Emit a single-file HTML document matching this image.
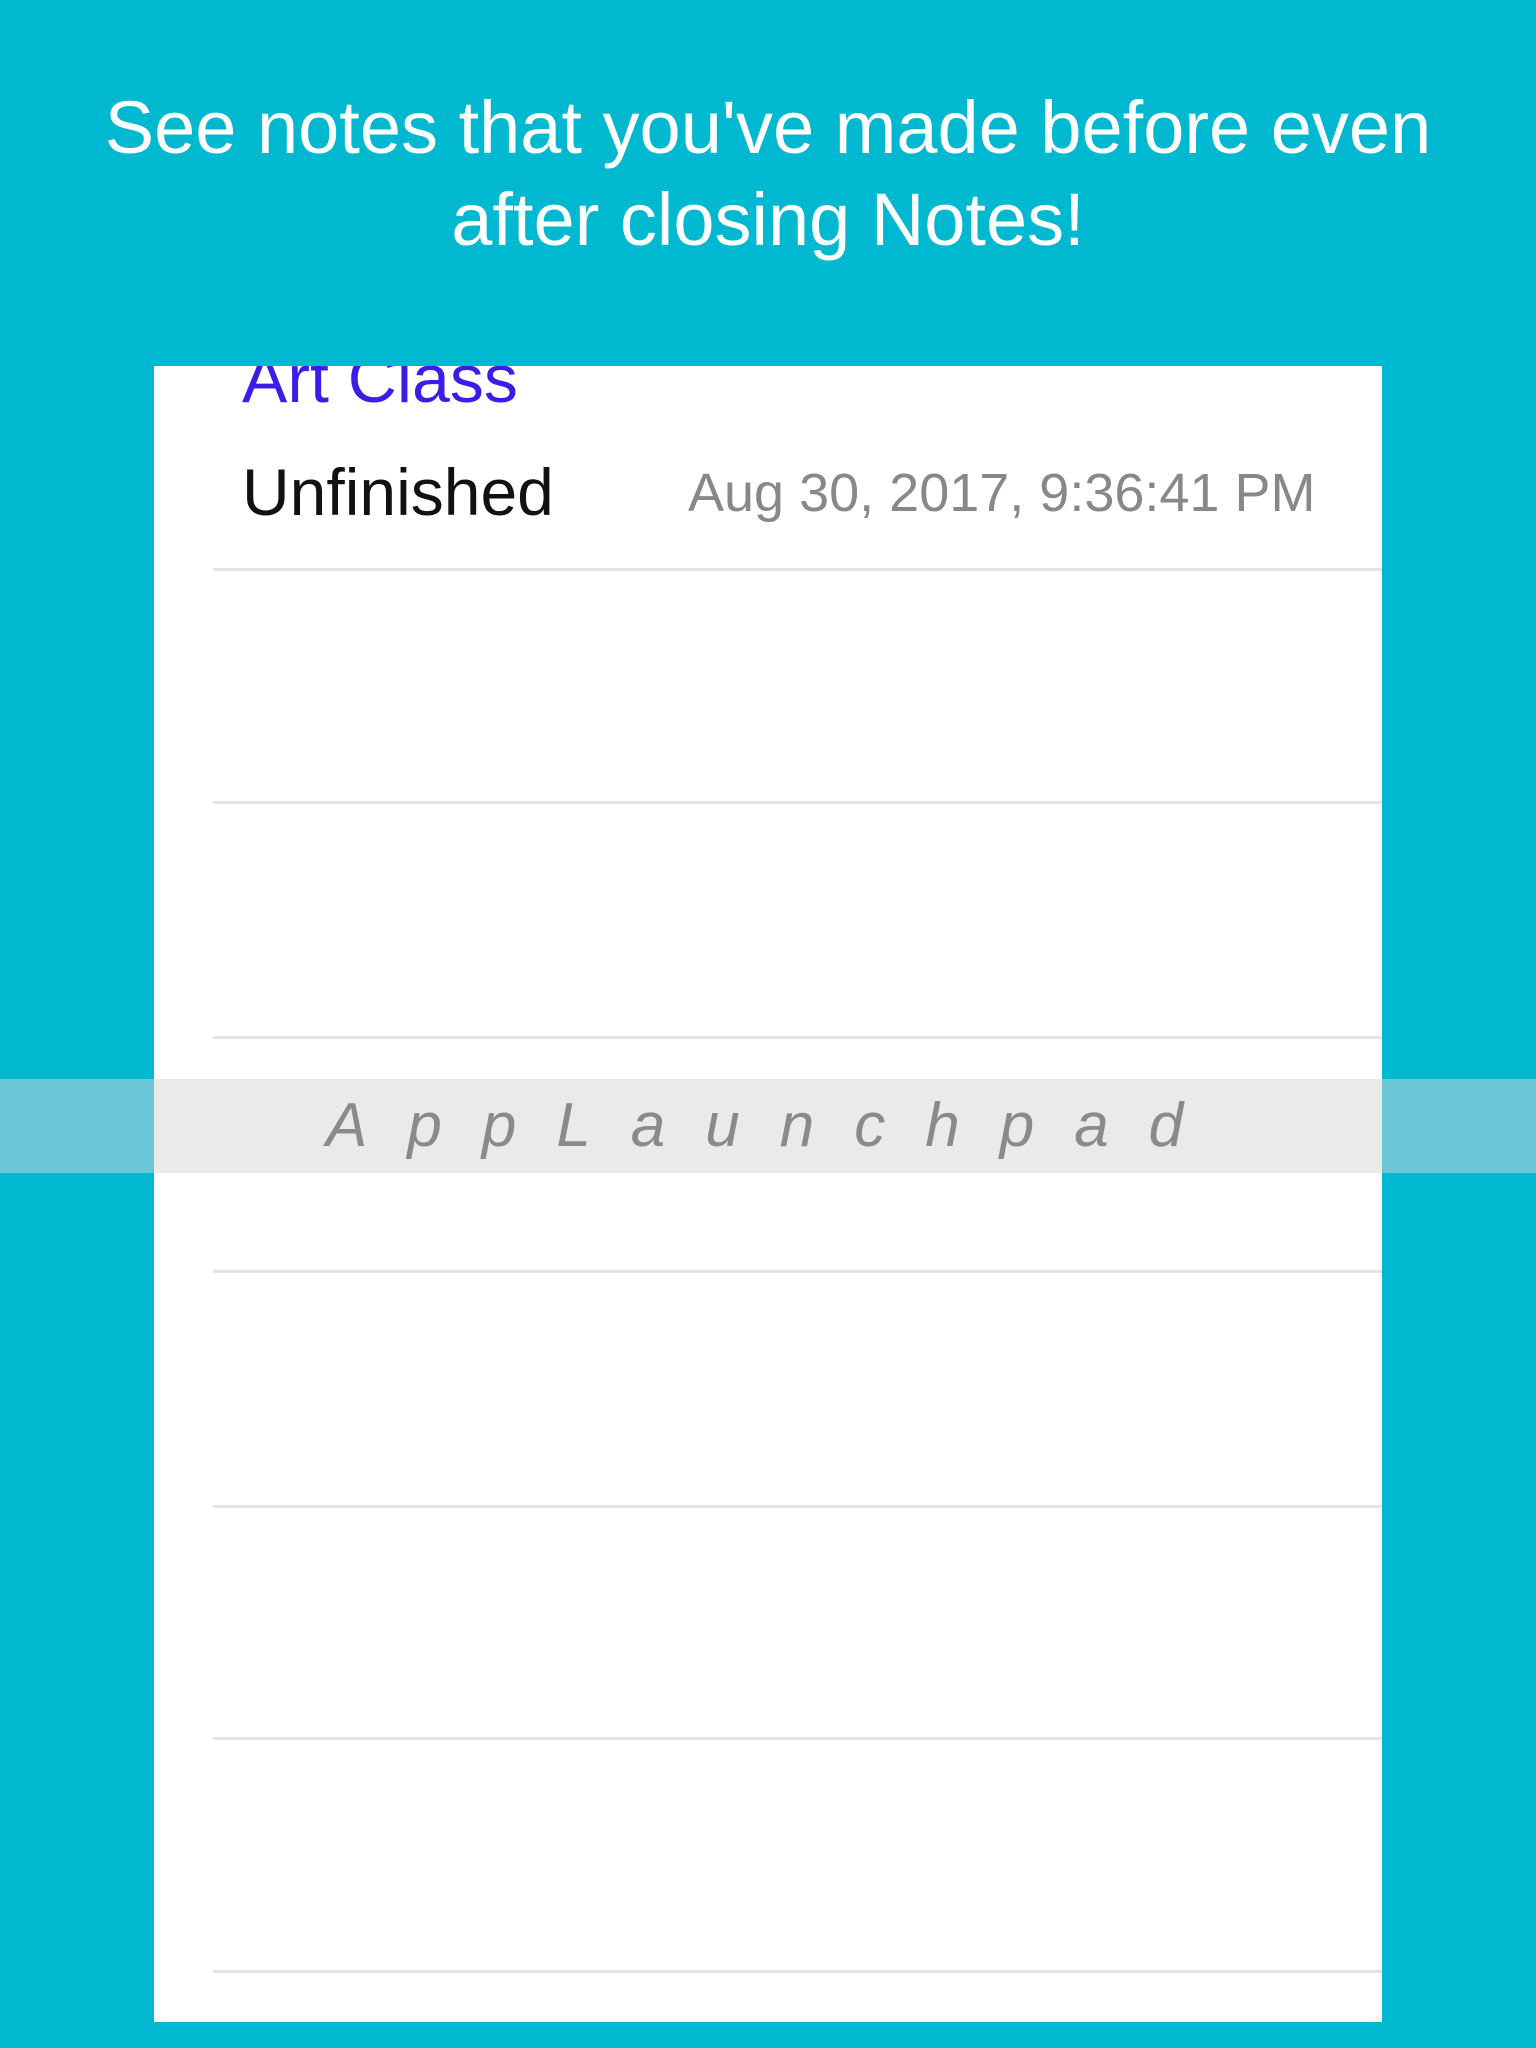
<!DOCTYPE html>
<html><head><style>
body{margin:0;width:1536px;height:2048px;background:#00b8d0;position:relative;overflow:hidden;font-family:"Liberation Sans",sans-serif}
.t{position:absolute;left:0;width:1536px;text-align:center;color:#fff;font-size:74px;line-height:92px}
.panel{position:absolute;left:154px;top:366px;width:1228px;height:1656px;background:#fff;overflow:hidden}
.line{position:absolute;left:59px;right:0;height:3px;background:#e4e4e4}
.band{position:absolute;left:0;top:1079px;width:1536px;height:94px;background:#6cc8d8}
.band2{position:absolute;left:154px;top:1079px;width:1228px;height:94px;background:#eaeaea;font-style:italic;color:#8a8a8a;font-size:62px;line-height:94px}
</style></head><body>
<div class="t" style="top:82px">See notes that you've made before even<br>after closing Notes!</div>
<div class="panel">
<div style="position:absolute;left:88px;top:-26px;font-size:68px;color:#3a1ee8">Art Class</div>
<div style="position:absolute;left:88px;top:88px;font-size:66px;color:#111">Unfinished</div>
<div style="position:absolute;left:534px;top:96px;font-size:54px;color:#888">Aug 30, 2017, 9:36:41 PM</div>
<div class="line" style="top:202px"></div>
<div class="line" style="top:435px"></div>
<div class="line" style="top:670px"></div>
<div class="line" style="top:904px"></div>
<div class="line" style="top:1139px"></div>
<div class="line" style="top:1371px"></div>
<div class="line" style="top:1604px"></div>
</div>
<div class="band"></div>
<div class="band2"><span style="position:absolute;left:172px;letter-spacing:40px;white-space:nowrap">AppLaunchpad</span></div>
</body></html>
